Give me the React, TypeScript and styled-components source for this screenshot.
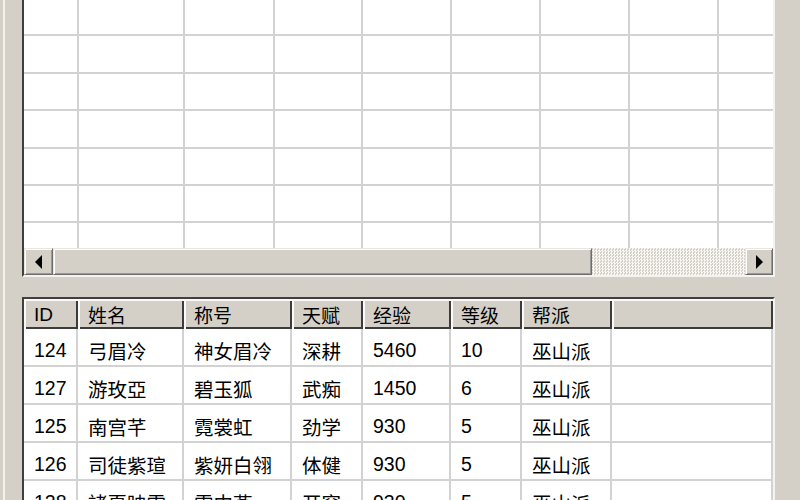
import React from 'react'
import styled, { createGlobalStyle } from 'styled-components'

const GlobalStyle = createGlobalStyle`
  html, body {
    margin: 0;
    padding: 0;
  }
  body {
    font-family: "Liberation Sans", "Noto Sans CJK SC", sans-serif;
    color: #000;
  }
`

const topColumns = [55, 106, 90, 88, 89, 89, 89, 89, 89]

const headers = [
  { label: 'ID', width: 54 },
  { label: '姓名', width: 106 },
  { label: '称号', width: 108 },
  { label: '天赋', width: 71 },
  { label: '经验', width: 88 },
  { label: '等级', width: 71 },
  { label: '帮派', width: 90 },
]

const members = [
  ['124', '弓眉冷', '神女眉冷', '深耕', '5460', '10', '巫山派'],
  ['127', '游玫亞', '碧玉狐', '武痴', '1450', '6', '巫山派'],
  ['125', '南宫芊', '霓裳虹', '劲学', '930', '5', '巫山派'],
  ['126', '司徒紫瑄', '紫妍白翎', '体健', '930', '5', '巫山派'],
  ['128', '諸夏映雪', '雪中燕', '开窍', '930', '5', '巫山派'],
]

const Arrow = ({ dir }: { dir: 'left' | 'right' }) => (
  <svg width="10" height="14" viewBox="0 0 10 14">
    {dir === 'left'
      ? <polygon points="8,0 8,14 1,7" fill="#000"/>
      : <polygon points="2,0 2,14 9,7" fill="#000"/>}
  </svg>
)

const App = () => {
  return (
    <Window>
      <GlobalStyle/>
      <TopFrame>
        <GridBody>
          <Rows>
            {Array.from({ length: 8 }).map((_, r) => (
              <EmptyRow key={r}>
                {topColumns.map((w, c) => <EmptyCell key={c} $width={w}/>)}
              </EmptyRow>
            ))}
          </Rows>
        </GridBody>
        <ScrollBar>
          <ScrollButton $width={29}><Arrow dir={'left'}/></ScrollButton>
          <Thumb/>
          <Track/>
          <ScrollButton $width={28}><Arrow dir={'right'}/></ScrollButton>
        </ScrollBar>
      </TopFrame>

      <BottomFrame>
        <HeaderRow>
          {headers.map(h => <HeaderCell key={h.label} $width={h.width}>{h.label}</HeaderCell>)}
          <HeaderCell $fill/>
        </HeaderRow>
        {members.map(m => (
          <DataRow key={m[0]}>
            {m.map((v, i) => <DataCell key={i} $width={headers[i].width}>{v}</DataCell>)}
            <DataCell $fill/>
          </DataRow>
        ))}
      </BottomFrame>
    </Window>
  )
}

const Window = styled.div`
  width: 800px;
  height: 500px;
  overflow: hidden;
  box-sizing: border-box;
  padding: 0 25px 0 22px;
  background: #d4d0c8;
  box-shadow: inset 3px 0 0 #d4d0c8, inset 5px 0 0 #f2f1ec;
`

const Frame = styled.div`
  border-style: solid;
  border-width: 2px;
  border-color: #404040 #f4f3ef #f4f3ef #404040;
  background: #fff;
`

const TopFrame = styled(Frame)`
  margin-top: -2px;
`

const BottomFrame = styled(Frame)`
  margin-top: 20px;
  height: 240px;
  overflow: hidden;
`

const GridBody = styled.div`
  height: 248px;
  overflow: hidden;
`

const Rows = styled.div`
  margin-top: -1px;
`

const EmptyRow = styled.div`
  display: flex;
  height: 37.4px;
  box-sizing: border-box;
  border-bottom: 2px solid #d2d2d2;
`

const EmptyCell = styled.div<{ $width: number }>`
  flex: 0 0 ${p => p.$width}px;
  box-sizing: border-box;
  border-right: 2px solid #d2d2d2;
`

const ScrollBar = styled.div`
  display: flex;
  height: 27px;
  background: #d4d0c8;
`

const Raised = styled.div`
  box-sizing: border-box;
  background: #d4d0c8;
  border: 1px solid;
  border-color: #e8e6e0 #6e6e6e #6e6e6e #e8e6e0;
  box-shadow: inset 1px 1px 0 #fff, inset -1px -1px 0 #9a9894;
`

const ScrollButton = styled(Raised)<{ $width: number }>`
  flex: 0 0 ${p => p.$width}px;
  display: flex;
  align-items: center;
  justify-content: center;
`

const Thumb = styled(Raised)`
  flex: 0 0 539px;
`

const Track = styled.div`
  flex: 1;
  background-color: #e6e4df;
  background-image: repeating-conic-gradient(#f7f6f3 0 25%, #d4d0c8 0 50%);
  background-size: 3px 3px;
`

const HeaderRow = styled.div`
  display: flex;
  height: 30px;
  background: #d4d0c8;
`

const HeaderCell = styled.div<{ $width?: number, $fill?: boolean }>`
  ${p => p.$fill ? 'flex: 1;' : `flex: 0 0 ${p.$width}px;`}
  box-sizing: border-box;
  display: flex;
  align-items: center;
  padding: 1px 0 0 10px;
  font-size: 19px;
  background: #d4d0c8;
  box-shadow: inset 2px 2px 0 #fbfaf7, inset -2px -2px 0 #3c3c3c;
`

const DataRow = styled.div`
  display: flex;
  height: 38px;
  box-sizing: border-box;
  border-bottom: 2px solid #d2d2d2;
`

const DataCell = styled.div<{ $width?: number, $fill?: boolean }>`
  ${p => p.$fill ? 'flex: 1;' : `flex: 0 0 ${p.$width}px;`}
  box-sizing: border-box;
  display: flex;
  align-items: center;
  padding: 7px 0 0 10px;
  font-size: 19.5px;
  white-space: nowrap;
  border-right: 2px solid #d2d2d2;
`

export default App
